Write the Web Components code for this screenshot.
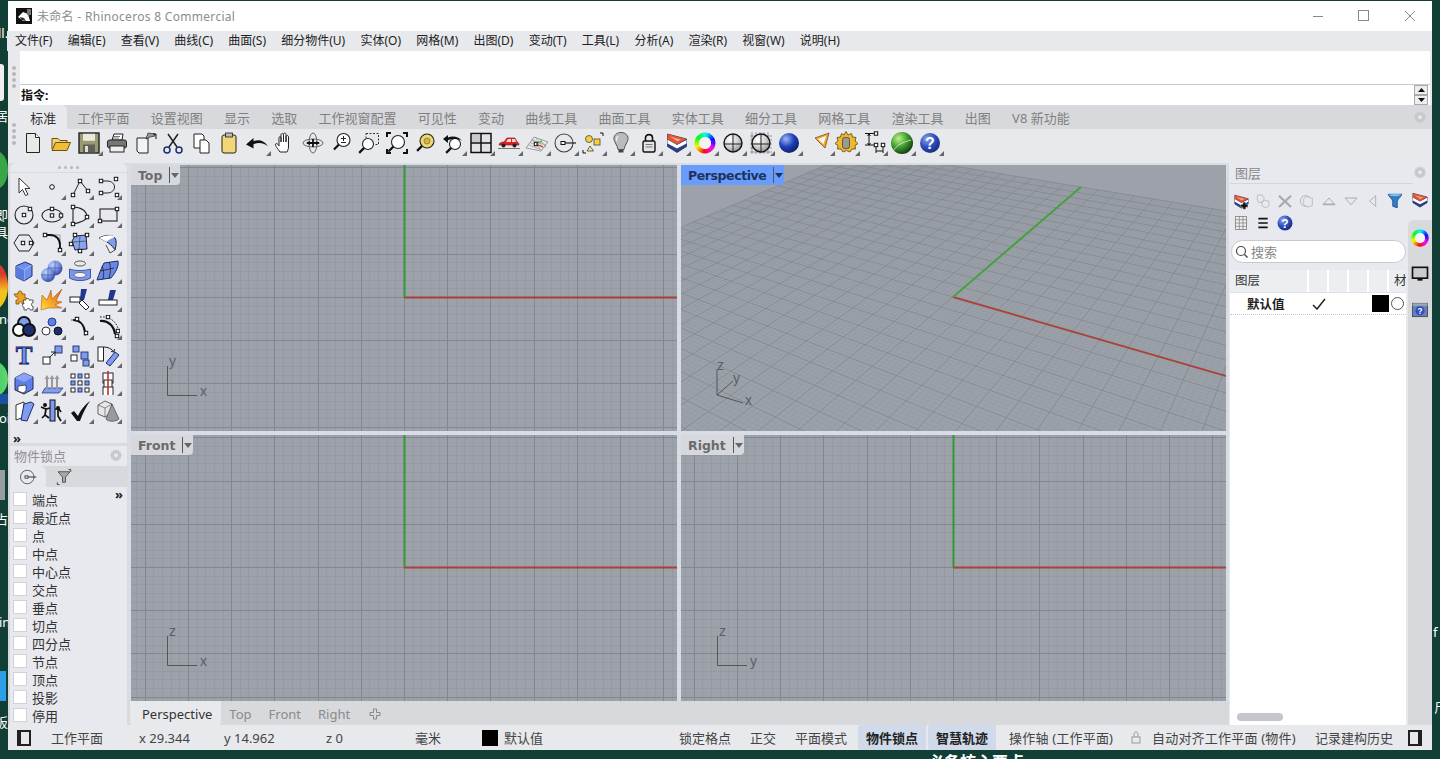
<!DOCTYPE html>
<html lang="zh">
<head>
<meta charset="utf-8">
<title>Rhinoceros 8</title>
<style>
  html, body { margin: 0; height: 100%; background: #113f35; overflow: hidden; }
  body { font-family: "Noto Sans", "Noto Sans CJK SC", sans-serif; font-size: 13px; color: #222; }
</style>
</head>
<body>
<rh-desktop>
  <rh-window>
    <rh-titlebar>未命名 - Rhinoceros 8 Commercial</rh-titlebar>
    <rh-menubar>
      <rh-menu>文件(F)</rh-menu><rh-menu>编辑(E)</rh-menu><rh-menu>查看(V)</rh-menu><rh-menu>曲线(C)</rh-menu><rh-menu>曲面(S)</rh-menu><rh-menu>细分物件(U)</rh-menu><rh-menu>实体(O)</rh-menu><rh-menu>网格(M)</rh-menu><rh-menu>出图(D)</rh-menu><rh-menu>变动(T)</rh-menu><rh-menu>工具(L)</rh-menu><rh-menu>分析(A)</rh-menu><rh-menu>渲染(R)</rh-menu><rh-menu>视窗(W)</rh-menu><rh-menu>说明(H)</rh-menu>
    </rh-menubar>
    <rh-command>指令:</rh-command>
    <rh-tabstrip>
      <rh-tab active>标准</rh-tab><rh-tab>工作平面</rh-tab><rh-tab>设置视图</rh-tab><rh-tab>显示</rh-tab><rh-tab>选取</rh-tab><rh-tab>工作视窗配置</rh-tab><rh-tab>可见性</rh-tab><rh-tab>变动</rh-tab><rh-tab>曲线工具</rh-tab><rh-tab>曲面工具</rh-tab><rh-tab>实体工具</rh-tab><rh-tab>细分工具</rh-tab><rh-tab>网格工具</rh-tab><rh-tab>渲染工具</rh-tab><rh-tab>出图</rh-tab><rh-tab>V8 新功能</rh-tab>
    </rh-tabstrip>
    <rh-toolbar id="top-tools"></rh-toolbar>
    <rh-main>
      <rh-sidebar>
        <rh-palette id="palette"></rh-palette>
        <rh-snaps>
          <rh-check>端点</rh-check><rh-check>最近点</rh-check><rh-check>点</rh-check><rh-check>中点</rh-check><rh-check>中心点</rh-check><rh-check>交点</rh-check><rh-check>垂点</rh-check><rh-check>切点</rh-check><rh-check>四分点</rh-check><rh-check>节点</rh-check><rh-check>顶点</rh-check><rh-check>投影</rh-check><rh-check>停用</rh-check>
        </rh-snaps>
      </rh-sidebar>
      <rh-viewports>
        <rh-viewport label="Top" h="x" v="y"></rh-viewport>
        <rh-viewport label="Perspective" active perspective></rh-viewport>
        <rh-viewport label="Front" h="x" v="z"></rh-viewport>
        <rh-viewport label="Right" h="y" v="z"></rh-viewport>
      </rh-viewports>
      <rh-layers></rh-layers>
    </rh-main>
    <rh-statusbar>
      <rh-status w="43" icon></rh-status>
      <rh-status w="88">工作平面</rh-status>
      <rh-status w="85">x 29.344</rh-status>
      <rh-status w="102">y 14.962</rh-status>
      <rh-status w="89">z 0</rh-status>
      <rh-status w="67">毫米</rh-status>
      <rh-status w="197" swatch>默认值</rh-status>
      <rh-status w="71">锁定格点</rh-status>
      <rh-status w="45">正交</rh-status>
      <rh-status w="63">平面模式</rh-status>
      <rh-status w="70" on>物件锁点</rh-status>
      <rh-status w="70" on>智慧轨迹</rh-status>
      <rh-status w="139" pad="11" spaced>操作轴 (工作平面)</rh-status>
      <rh-status w="15" lock></rh-status>
      <rh-status w="163" spaced>自动对齐工作平面 (物件)</rh-status>
      <rh-status w="93">记录建构历史</rh-status>
      <rh-status w="22" icon2></rh-status>
    </rh-statusbar>
  </rh-window>
</rh-desktop>
<script>
// small svg helpers
const cp = (x, y, s = 3.4) => `<rect x="${x - s / 2}" y="${y - s / 2}" width="${s}" height="${s}" fill="#fff" stroke="#111" stroke-width="1"/>`;
const bsq = (x, y, s = 5) => `<rect x="${x}" y="${y}" width="${s}" height="${s}" fill="#7f9cf0" stroke="#1d2c66" stroke-width=".9"/>`;
const wsq = (x, y, s = 5) => `<rect x="${x}" y="${y}" width="${s}" height="${s}" fill="#fff" stroke="#111" stroke-width=".9"/>`;
const ball = (id, c1, c2, c3, cx = 12, cy = 12, r = 10) => `<defs><radialGradient id="${id}" cx=".35" cy=".3" r=".8"><stop offset="0" stop-color="${c1}"/><stop offset=".5" stop-color="${c2}"/><stop offset="1" stop-color="${c3}"/></radialGradient></defs><circle cx="${cx}" cy="${cy}" r="${r}" fill="url(#${id})"/>`;
const mag = (x, y, r = 5.5, f = '#fff') => `<circle cx="${x}" cy="${y}" r="${r}" fill="${f}" stroke="#222" stroke-width="1.1"/><path d="M${x - r * .7} ${y + r * .7}L${x - r * .7 - 5} ${y + r * .7 + 5}" stroke="#111" stroke-width="2.2"/>`;
function wheel() {
  let s = '';
  for (let i = 0; i < 30; i++) {
    const a = i / 30 * 2 * Math.PI, b = (i + 1.2) / 30 * 2 * Math.PI, r = 8.2;
    s += `<path d="M${12 + r * Math.cos(a)} ${12 + r * Math.sin(a)}A${r} ${r} 0 0 1 ${12 + r * Math.cos(b)} ${12 + r * Math.sin(b)}" fill="none" stroke="hsl(${i * 12 - 90},95%,50%)" stroke-width="4.4"/>`;
  }
  return s + '<circle cx="12" cy="12" r="6" fill="#f4f4f4"/>';
}
const stack = `<path d="M2.500 3L21.500 8v7.500L12 21.500l-9.500-6z" fill="#2b3f8f" stroke="#1c2340" stroke-width=".7"/><path d="M2.500 8.500L12 14l9.500-5v3.500L12 17.500l-9.500-5z" fill="#fff"/><path d="M2.500 3L21.500 8 12 13.500l-9.500-5.500z" fill="#e4572e"/><path d="M5 5.500l11 3-3.500 2z" fill="#f6a58a"/>`;
const sphereLines = id => `${ball(id, '#ffffff', '#d4d4d4', '#8a8a8a', 12, 12, 9)}<circle cx="12" cy="12" r="9" fill="none" stroke="#111" stroke-width="1.400"/><path d="M3 13h18M12 3v18" stroke="#222" stroke-width="1"/>`;

const ICONS = {
  new: `<path d="M5.500 2.500h9l4 4v15h-13z" fill="#e9e9e6" stroke="#222"/><path d="M14.500 2.500v4h4" fill="#fff" stroke="#222"/>`,
  open: `<path d="M3 18V7.500h6l2 2h7V12" fill="#f3d36a" stroke="#6b5314"/><path d="M3 19.500l3.500-8h15l-3.500 8z" fill="#f1bc3a" stroke="#6b5314"/>`,
  save: `<rect x="2" y="2" width="20" height="20" fill="#9c9870" stroke="#222" stroke-width="1.400"/><rect x="6" y="2.800" width="12" height="7" fill="#e9e9e0"/><rect x="6" y="13.500" width="12" height="8" fill="#5f5f5a"/><rect x="8" y="15" width="3" height="6" fill="#e0e0d0"/>`,
  print: `<path d="M7 9l2-6h9l-1 6z" fill="#fff" stroke="#222"/><rect x="2.500" y="9" width="19" height="8" rx="2" fill="#777" stroke="#222"/><rect x="5" y="15" width="14" height="6" fill="#eee" stroke="#222"/><path d="M8 5.500h7M8 7h6" stroke="#555" stroke-width=".8"/>`,
  props: `<path d="M4 7h11v15H6l-2-2z" fill="#f4f4f4" stroke="#222"/><path d="M13 8l2-6 7 1v2l-5 1z" fill="#999" stroke="#222" stroke-width=".7"/><path d="M20 3h3v5" stroke="#111" fill="none"/>`,
  cut: `<path d="M7 3l9 13M17 3L8 16" stroke="#222" stroke-width="1.500"/><circle cx="6" cy="19" r="3" fill="none" stroke="#1d2f70" stroke-width="1.500"/><circle cx="18" cy="19" r="3" fill="none" stroke="#1d2f70" stroke-width="1.500"/>`,
  copy: `<path d="M5 3h8l2 2v12H5z" fill="#fff" stroke="#222"/><path d="M11 9h6l3 3v10h-9z" fill="#fff" stroke="#222"/>`,
  paste: `<rect x="5" y="4" width="14" height="18" rx="2" fill="#f3d677" stroke="#222"/><rect x="8.500" y="2" width="7" height="4" fill="#bbb" stroke="#222" stroke-width=".8"/>`,
  undo: `<path d="M1 13.500l7.500-6.500v3.200c5.500-2.200 10.500-.7 14.500 5-5-3.500-9.500-4-14.500-2v4.300z" fill="#111"/>`,
  pan: `<path d="M7 21c-2-3-5-6-4.500-8 1-1 2.500 0 3.500 2V7c0-2 2-2 2 0v4-7c0-2 2.500-2 2.500 0v7-7.500c0-2 2.500-2 2.500 0V11 6c0-2 2.500-2 2.500 0v10c0 2-1 4-1.500 5z" fill="#fff" stroke="#222"/>`,
  rotate: `<ellipse cx="12" cy="12" rx="10" ry="4" fill="none" stroke="#666"/><ellipse cx="12" cy="12" rx="4" ry="10" fill="none" stroke="#666"/><path d="M6 12h12M12 8v8" stroke="#111" stroke-width="1.800"/><path d="M15 10l4 2-4 2zM9 10l-4 2 4 2z" fill="#111"/>`,
  zoomin: `${mag(14.500, 9, 6.500)}<path d="M12 7.500h5M14.500 5v5M12 11.500h5" stroke="#222"/>`,
  zoomwin: `<rect x="9" y="2.500" width="12.500" height="11" fill="none" stroke="#333" stroke-dasharray="2 1.500"/>${mag(11, 13, 5.500)}`,
  zoomext: `${mag(13, 11, 6.500)}<path d="M2 6V2h4M18 2h4v4M22 18v4h-4M2 18v4h4" stroke="#111" stroke-width="2" fill="none"/>`,
  zoomsel: `${mag(14, 10, 7, '#efd86a')}<circle cx="14" cy="10" r="3" fill="#e0b52c" stroke="#777" stroke-width=".8"/>`,
  undoview: `${mag(14, 13, 5.500)}<path d="M2 8l5-4v2.500c5-2 10-1 14 3-4-2-9-2-14-.5V12z" fill="#111"/>`,
  views: `<rect x="2" y="2.500" width="20" height="19" fill="#e3e3e3" stroke="#111" stroke-width="1.500"/><path d="M12 2.500v19M2 12h20" stroke="#111" stroke-width="1.500"/><rect x="3" y="3.500" width="8" height="7.500" fill="#c9c9c9"/>`,
  car: `<path d="M2 14c0-2 2-3 5-3l3-4h8l2 4c1 0 2 1 2 3z" fill="#dd2222" stroke="#8c1010" stroke-width=".6"/><path d="M11 8h3v3H9zM15 8h3l1 3h-4z" fill="#f6dede"/><circle cx="6.500" cy="14.500" r="2" fill="#222"/><circle cx="17.500" cy="14.500" r="2" fill="#222"/><path d="M1 17.500h22" stroke="#777"/>`,
  gridsnap: `<path d="M1 17L9 6l14 5-7 9z" fill="#e8e8e8" stroke="#888" stroke-width=".8"/><path d="M5 11.500l14 5M7 9l14 5M4 14l13 5M7 8l8 10M11 7l7 9M15 8.500l6 8" stroke="#888" stroke-width=".6"/>${cp(11, 13)}<path d="M11 13l6-3" stroke="#2a9a2a"/><path d="M11 13l7 3" stroke="#cc2222"/>`,
  cplane: `<circle cx="11" cy="12" r="9" fill="none" stroke="#444" stroke-width="1.100"/><rect x="8" y="10.500" width="4" height="3" fill="#fff" stroke="#111"/><path d="M12 12h11" stroke="#222" stroke-width="1.200"/>`,
  osnap: `<circle cx="8" cy="8" r="3.500" fill="#f6d13a" stroke="#444" stroke-width=".8"/><rect x="13" y="8" width="6" height="6" fill="#f6d13a" stroke="#444" stroke-width=".8"/><path d="M9 15l3.500 5H6z" fill="#f6e29a" stroke="#444" stroke-width=".8"/><path d="M19 2h3v3M2 19v3h3" fill="none" stroke="#111"/>`,
  bulb: `<path d="M12 1.500c5 0 7.500 3.500 7 7-.5 3-3.500 6-4 10h-6c-.5-4-3.500-7-4-10-.5-3.500 2-7 7-7z" fill="#b9bcbc" stroke="#555"/><path d="M9.500 19h5v2.500h-5z" fill="#444"/><path d="M9 5c-1 1-2 3-1 5" stroke="#eee" stroke-width="1.500" fill="none"/>`,
  lock: `<rect x="6" y="10" width="12" height="11" rx="1.500" fill="#e4e4e4" stroke="#111" stroke-width="1.400"/><path d="M8.500 10V7c0-4.500 7-4.500 7 0v3" fill="none" stroke="#111" stroke-width="1.600"/><path d="M8.500 13.500h7M8.500 16h7" stroke="#777"/>`,
  layers: stack,
  wheel: wheel(),
  wire: sphereLines('w1'),
  wiregrid: `<path d="M1 5h22M1 9h22M1 13h22M1 17h22M1 21h22M3 1v22M7 1v22M11 1v22M15 1v22M19 1v22" stroke="#777" stroke-width=".7"/>${sphereLines('w2')}`,
  blue: `${ball('b1', '#9fb8f5', '#1f3fb8', '#081a55')}`,
  light: `<path d="M6 7l14-5-4 15z" fill="#f3a93a" stroke="#7a4a10" stroke-width=".8"/><path d="M9 8l8-3-2.500 8z" fill="#fff"/>`,
  gear: `<path d="M12 .500l2 3.500 3.500-1.500 1 3.500 3.500.5-1 3.500 3 2.500-3 2 .5 3.500-3.500 0-2 3-3.500-1.500-3.500 1.500-2-3-3.500 0 .5-3.500-3-2 3-2.500-1-3.500 3.500-.5 1-3.500L10 4z" fill="#eeb92f" stroke="#6e5310" stroke-width=".9"/><rect x="8.500" y="6.500" width="7" height="11" rx="2" fill="#9b9b8c" stroke="#444" stroke-width=".8"/>`,
  dim: `<path d="M3 2.500h9M3 14h9M7 3v11M5.500 5L7 3l1.500 2M5.500 12L7 14l1.500-2M14 15v7M21 15v7M14 20h7" fill="none" stroke="#111"/>${cp(14, 2.500)}${cp(14, 14)}${cp(21, 14)}`,
  green: `${ball('g1', '#bff08c', '#3d9c2e', '#0b2a0c', 12, 12, 11)}<path d="M4 19c3-5 9-8 17-10" stroke="#d8f5c0" stroke-width=".8" fill="none"/>`,
  help: `${ball('h1', '#8ea6ec', '#2f4fc0', '#12256f')}<text x="12" y="18" text-anchor="middle" font-family="Liberation Sans, sans-serif" font-weight="700" font-size="16" fill="#fff">?</text>`,
  // left palette
  select: `<path d="M7 3v15l3.500-3.500 3 6 2.500-1-3-6h5z" fill="#fff" stroke="#333"/>`,
  point: `<circle cx="12" cy="12" r="2.300" fill="#fff" stroke="#111"/>`,
  polyline: `<path d="M5 20l7-14 8 10" fill="none" stroke="#222"/>${cp(5, 20)}${cp(12, 6)}${cp(20, 16)}`,
  curve: `<path d="M5 6h6c10 0 10 12 0 12H5" fill="none" stroke="#222"/>${cp(5, 6)}${cp(20, 4)}${cp(5, 18)}${cp(21, 20)}`,
  circle: `<circle cx="12" cy="12" r="9" fill="none" stroke="#222" stroke-width="1.100"/>${cp(12, 12)}${cp(18, 6)}`,
  ellipse: `<ellipse cx="12" cy="12.500" rx="10" ry="6.500" fill="none" stroke="#222" stroke-width="1.100"/>${cp(12, 6)}${cp(12, 12.500)}${cp(21, 12.500)}`,
  arc: `<path d="M5 4c8 0 14 4 14 10 0 3-8 6-14 7z" fill="none" stroke="#222" stroke-width="1.100"/>${cp(5, 4)}${cp(19, 14)}${cp(5, 21)}`,
  rect: `<rect x="4" y="6" width="17" height="12" fill="none" stroke="#222" stroke-width="1.100"/>${cp(4, 18)}${cp(21, 6)}`,
  polygon: `<path d="M7 4h10l5 8-5 8H7l-5-8z" fill="none" stroke="#222"/>${cp(11, 12)}${cp(19, 12)}`,
  fillet: `<path d="M6 4h8l6 0v14" fill="none" stroke="#999"/><path d="M6 4h4c6 0 10 4 10 10v4" fill="none" stroke="#111" stroke-width="1.800"/>${cp(5, 4)}${cp(20, 19)}`,
  patch: `<path d="M7 5l11-1 1 14-12 1-3-9z" fill="#8aa4ee" stroke="#223"/><path d="M5 11l14-1M12 4.500l-1 14" stroke="#345" stroke-width=".7"/>${cp(7, 4)}${cp(19, 4)}${cp(3, 13)}${cp(12, 20)}`,
  edge: `<path d="M3 7c6-3 13-4 16 0 2 3 1 8 0 12-3-5-8-9-16-12z" fill="#7f9cf0" stroke="#222"/><path d="M3 7c6-3 13-4 16-1-3 1-7 3-8 5z" fill="#fff"/><path d="M10 14l4 8 5-3" fill="#eee" stroke="#222" stroke-width=".8"/>`,
  box: `<path d="M4 7l9-4 7 3v11l-8 5-8-4z" fill="#6f8ff0" stroke="#1d2c66"/><path d="M4 7l8 4 8-5M12 11v11" stroke="#cfe" stroke-width=".5" fill="none"/><path d="M4 7l8 4v11l-8-4z" fill="#5a7bde"/>`,
  spheres: `${ball('s1', '#c3d0fa', '#7390ea', '#2a3f90', 15, 9, 7.500)}${ball('s2', '#c3d0fa', '#7390ea', '#2a3f90', 8, 16, 7)}<path d="M1 16h14M8 9v14" stroke="#345" stroke-width=".5"/><path d="M8 9h14M15 2v14" stroke="#345" stroke-width=".5"/>`,
  cyl: `<ellipse cx="12" cy="4.500" rx="5.500" ry="2.500" fill="#e8e9ed" stroke="#333" stroke-width=".8"/><path d="M1.500 10c6 2 15 2 21 0v9c-6 3.500-15 3.500-21 0z" fill="#7a96ee" stroke="#2a3a80" stroke-width=".8"/><ellipse cx="12" cy="16" rx="6" ry="2.500" fill="#f4f4f4" stroke="#223" stroke-width=".5"/>`,
  gridsrf: `<path d="M8 4l14-2c1 5-2 11-7 17L1 21c2-6 4-11 7-17z" fill="#6a87e4" stroke="#1d2c66"/><path d="M4 12l14 -3M6 7c2 4 2 9 1 13M13 3c2 4 2 9 0 16" stroke="#223" stroke-width=".8" fill="none"/>`,
  puzzle: `<path d="M2 7h4c-1-4 5-4 4 0h3v4c3-1 3 4 0 3v3h-3c1-3-4-3-3 0H4v-4c3 1 3-4 0-3z" fill="#f0a21e" stroke="#7a4a10" stroke-width=".8"/><path d="M11 13h3c-1-2 4-2 3 0h4v3c-2-1-2 4 0 3v4h-3c1-2-4-2-3 0h-3v-3c-2 1-2-4 0-3z" fill="#fff" stroke="#333" stroke-width=".8"/>`,
  explode: `<defs><linearGradient id="ex" x1="0" y1="1" x2="1" y2="0"><stop offset="0" stop-color="#ffe03a"/><stop offset="1" stop-color="#e2560e"/></linearGradient></defs><path d="M1 23l1-15 5 5 4-10 1 9 10-10-6 12 6 1-7 3 7 3H8z" fill="url(#ex)" stroke="#a34a10" stroke-width=".5"/>`,
  trim: `<path d="M13 2h6l-3 11h-4z" fill="#22358f"/><rect x="2" y="10" width="10" height="5" fill="#fff" stroke="#222"/><path d="M14 13l7 7-3 3-7-7z" fill="#fff" stroke="#222"/>`,
  split: `<path d="M14 3h6l-3 10h-5z" fill="#22358f"/><rect x="3" y="13" width="18" height="5" fill="#fff" stroke="#222"/>`,
  boolean: `<circle cx="12" cy="8" r="6" fill="#7f9cf0" stroke="#111" stroke-width="2"/><circle cx="7" cy="15" r="6" fill="#fff" stroke="#111" stroke-width="2"/><circle cx="17" cy="15" r="6" fill="#1e2e70" stroke="#111" stroke-width="2"/>`,
  circles: `<circle cx="12" cy="7" r="4" fill="#5f7fe4" stroke="#223a90"/><circle cx="6" cy="16" r="4" fill="#fff" stroke="#333"/><circle cx="18" cy="16" r="4" fill="#1e2e70" stroke="#111"/>`,
  filletarc: `<path d="M5 5c6 0 11 4 12 12" fill="none" stroke="#111" stroke-width="2"/><path d="M3 5h3M17 17v4" stroke="#555"/>${cp(9, 4)}${cp(18, 18)}`,
  offset: `<path d="M4 6c8-1 14 5 15 13" fill="none" stroke="#111" stroke-width="2.200"/><path d="M4 2c11-1 18 6 19 16" fill="none" stroke="#111" stroke-dasharray="1.500 1.500"/>${cp(12, 2)}${cp(22, 16)}${cp(21, 21)}`,
  text: `<text x="12" y="21" text-anchor="middle" font-family="Liberation Serif, serif" font-weight="700" font-size="25" fill="#6f8ff0" stroke="#14225e" stroke-width=".9">T</text>`,
  move: `${wsq(3, 14, 7)}${bsq(15, 3, 7)}<path d="M9 15l6-6M11 9h4v4" fill="none" stroke="#222"/>`,
  copyobj: `${bsq(5, 3, 6)}${wsq(3, 12, 6)}${bsq(13, 9, 7)}${bsq(15, 17, 6)}`,
  rotobj: `<rect x="2" y="4" width="5.500" height="14" fill="#fff" stroke="#222"/><path d="M8 4c4 0 8 2 10 5M18 9l-3-.5M18 9l.5-3" fill="none" stroke="#222"/><path d="M19 9l4 3-9 11-4-3z" fill="#7f9cf0" stroke="#1d2c66"/>`,
  extr: `<path d="M3 7l9-5 9 4v12l-9 5-9-4z" fill="#5f7ee8" stroke="#1d2c66"/><path d="M3 7l9 4 9-5-9-4z" fill="#8ba4f2"/><path d="M6 15l8-1v6l-3 2-5-2z" fill="#fff" stroke="#222" stroke-width=".7"/>`,
  arrows: `<path d="M5 17l-3 5h17l4-5z" fill="#7f9cf0" stroke="#1d2c66" stroke-width=".7"/><path d="M7 18V7M12 18V7M17 18V7" stroke="#999" stroke-width="2"/><path d="M4.500 8L7 4l2.500 4zM9.500 8L12 4l2.500 4zM14.500 8L17 4l2.500 4z" fill="#999"/>`,
  array: [0, 1, 2].map(r => [0, 1, 2].map(c => (r + c) % 2 ? bsq(3 + c * 7, 3 + r * 7, 4) : wsq(3 + c * 7, 3 + r * 7, 4)).join('')).join(''),
  cage: `${wsq(7, 2, 10)}${wsq(8, 9, 8)}${wsq(7, 16, 10)}<path d="M12 0v24" stroke="#c0302a" stroke-width="1.600"/>`,
  mirror: `<path d="M4 6l8-3v15l-8 3z" fill="#fff" stroke="#333"/><path d="M12 5l7-2 3 2-7 17-6-1z" fill="#7f9cf0" stroke="#1d2c66"/>`,
  figure: `<rect x="10" y="1" width="5" height="21" fill="#7f9cf0" stroke="#111"/><circle cx="5" cy="6" r="2" fill="#111"/><path d="M1 8l5 2 4-1M6 10l-1 6 4 3M5 16l-3 3" stroke="#111" stroke-width="1.700" fill="none"/><circle cx="18" cy="9" r="2" fill="#111"/><path d="M15 10h4l2 3M18 11v6l3 5" stroke="#111" stroke-width="1.700" fill="none"/>`,
  check: `<path d="M3 14l3-2 4 5c3-7 7-11 12-15-4 6-7 12-10 20h-3z" fill="#111"/>`,
  cone: `<path d="M2 6l7-4 7 3v9l-7 4-7-3z" fill="#e6e6e6" stroke="#444" stroke-width=".8"/><path d="M2 6l7 3 7-4M9 9v9" stroke="#444" stroke-width=".6" fill="none"/><path d="M16 5l7 15c-3 3-11 3-13 0z" fill="#9a9a9a" stroke="#444" stroke-width=".7"/>`,
  // layer panel
  newlayer: `${stack}<path d="M14 13h4v3h3v4h-3v3h-4v-3h-3v-4h3z" fill="#111" stroke="#fff" stroke-width=".5"/>`,
  dup: `<path d="M4 3h7l3 5-3 6H5l-2-5zM14 11l7 1v7l-4 3-6-2-1-6z" fill="none" stroke="#aaa"/>`,
  xgray: `<path d="M4 5l16 15M20 5L4 20" stroke="#aaa" stroke-width="3"/>`,
  undolayer: `<circle cx="10" cy="12" r="8" fill="none" stroke="#aaa" stroke-width="1.200"/><path d="M11 5l9 3v11l-7 2-6-3V9z" fill="#e8e9ef" stroke="#aaa"/>`,
  triup: `<path d="M4 17L12 8l8 9z" fill="none" stroke="#999"/><path d="M4 16h16" stroke="#999"/>`,
  tridown: `<path d="M4 8l8 9 8-9z" fill="none" stroke="#999"/>`,
  trileft: `<path d="M16 4L7 12l9 8z" fill="none" stroke="#999"/>`,
  funnel: `<path d="M3 3h18c0 3-6 6-6 10v8l-6-2v-6C9 9 3 6 3 3z" fill="#2f80c8" stroke="#123a80"/><ellipse cx="12" cy="4" rx="8" ry="1.500" fill="#7cc2ee"/>`,
  funnelgray: `<path d="M4 5h16l-6 7v7h-4v-7z" fill="#aaa" stroke="#333"/><path d="M3 19v3h3M18 2h3v3" stroke="#222" fill="none"/>`,
  table: `<rect x="4" y="2" width="16" height="20" fill="#eee" stroke="#666"/><path d="M4 7h16M4 12h16M4 17h16M9.500 2v20M15 2v20" stroke="#777"/>`,
  list: `<path d="M5 5.500h14M5 12h14M5 18.500h14" stroke="#111" stroke-width="2.600"/>`,
  monitor: `<rect x="3" y="4" width="18" height="13" fill="#ccc" stroke="#111" stroke-width="2"/><path d="M9 18h6v2H9z" fill="#111"/>`,
  helppanel: `<rect x="3" y="4" width="18" height="16" fill="#6c7fb8" stroke="#444"/><rect x="3" y="4" width="18" height="3" fill="#9aa"/><circle cx="12" cy="13" r="5.500" fill="#2f4fc0"/><text x="12" y="17" text-anchor="middle" font-family="Liberation Sans, sans-serif" font-weight="700" font-size="10" fill="#fff">?</text>`,
  gearflat: `<path d="M12 3l1.500 2.500 3-1 .5 3 3 .5-1 3 2.500 1.500-2.500 1.500 1 3-3 .5-.5 3-3-1L12 22l-1.500-2.500-3 1-.5-3-3-.5 1-3L2.500 12.500 5 11l-1-3 3-.5.5-3 3 1z" fill="#c6c8cc"/><circle cx="12" cy="12.500" r="3" fill="#e8e9ef"/>`
};
const svg = (name, size = 24) => `<svg width="${size}" height="${size}" viewBox="0 0 24 24">${ICONS[name] || ''}</svg>`;

const define = (tag, css, html, setup) => customElements.define(tag, class extends HTMLElement {
  connectedCallback() {
    if (this.shadowRoot) return;
    this.attachShadow({ mode: 'open' });
    this.shadowRoot.innerHTML = `<style>${css}</style>${typeof html === 'function' ? html(this) : html}`;
    if (setup) setup(this);
  }
});

define('rh-desktop', `
  :host { display: block; position: relative; width: 1440px; height: 759px; overflow: hidden; background: #113f35; }
  .f { position: absolute; }
  .t { position: absolute; color: #fff; font-size: 13px; line-height: 14px; }
`, `
  <div class="t" style="left:-2px;top:26px">ll.</div>
  <div class="f" style="left:-8px;top:64px;width:12px;height:37px;background:#eee;border-radius:3px"></div>
  <div class="t" style="left:-5px;top:109px">居</div>
  <div class="f" style="left:-20px;top:150px;width:28px;height:40px;border-radius:50%;background:#3aa648"></div>
  <div class="t" style="left:-5px;top:208px">即</div>
  <div class="t" style="left:-5px;top:225px">具</div>
  <div class="f" style="left:-22px;top:262px;width:30px;height:48px;border-radius:50%;background:linear-gradient(#d8392c 25%,#f4c21c 60%)"></div>
  <div class="t" style="left:-1px;top:312px">ne</div>
  <div class="f" style="left:-22px;top:361px;width:30px;height:36px;border-radius:50%;background:linear-gradient(90deg,#2fb85c,#5fd870)"></div>
  <div class="f" style="left:-6px;top:394px;width:14px;height:10px;background:#1c4fa0"></div>
  <div class="t" style="left:-1px;top:411px">oi</div>
  <div class="f" style="left:-3px;top:470px;width:8px;height:30px;background:#9a9d9d"></div>
  <div class="t" style="left:-5px;top:512px">占</div>
  <div class="t" style="left:-1px;top:615px">in</div>
  <div class="f" style="left:-4px;top:671px;width:10px;height:30px;background:#2f9ee8"></div>
  <div class="t" style="left:-5px;top:715px">板</div>
  <div class="t" style="left:1433px;top:625px">f</div>
  <div class="t" style="left:1434px;top:700px">斤</div>
  <div class="t" style="left:928px;top:752px;font-size:16px;font-weight:700;line-height:20px">必备核心要点</div>
  <slot></slot>
`);

define('rh-window', `
  :host { display: block; position: absolute; left: 8px; top: 1px; width: 1424px; height: 749px; }
  .frame { display: flex; flex-direction: column; height: 100%; background: #e8e9ed; }
`, `<div class="frame"><slot></slot></div>`);

define('rh-titlebar', `
  :host { display: flex; align-items: center; height: 30px; flex: none; background: #fff; color: #8c8c8c; font-size: 12px; letter-spacing: .3px; padding-bottom: 1px; box-sizing: border-box; }
  .logo { margin: 0 5px 0 8px; display: block; }
  .txt { flex: 1; }
  .ctl { width: 46px; display: flex; justify-content: center; }
`, `
  <svg class="logo" width="16" height="16" viewBox="0 0 16 16"><rect width="16" height="16" fill="#111"/><path d="M2 9l5-5 5 2 2 7H7z" fill="#fff"/><path d="M4 9l4 1 2 3-5-1z" fill="#333"/><rect x="11" y="1" width="4" height="6" fill="#777"/></svg>
  <span class="txt"><slot></slot></span>
  <span class="ctl"><svg width="12" height="12"><path d="M1 6.500h10" stroke="#888"/></svg></span>
  <span class="ctl"><svg width="12" height="12"><rect x=".5" y=".5" width="10" height="10" fill="none" stroke="#888"/></svg></span>
  <span class="ctl" style="margin-right:-1px"><svg width="12" height="12"><path d="M1 1l10 10M11 1L1 11" stroke="#888"/></svg></span>
`);

define('rh-menubar', `:host { display: flex; align-items: center; height: 20px; flex: none; background: #e8e9ed; font-size: 12px; padding-bottom: 1px; box-sizing: border-box; text-indent: 0; margin-left: -.6px; }`, `<slot></slot>`);
define('rh-menu', `:host { display: block; padding: 0 7.600px; white-space: nowrap; color: #222; line-height: 20px; }`, `<slot></slot>`);

define('rh-command', `
  :host { display: flex; flex: none; height: 54px; background: #e8e9ed; }
  .grip { width: 12px; flex: none; display: flex; flex-direction: column; align-items: center; justify-content: center; gap: 2px; padding-bottom: 2px; }
  .grip i { width: 4px; height: 4px; border-radius: 50%; background: #b5b7bb; }
  .col { flex: 1; display: flex; flex-direction: column; margin-right: 2px; }
  .hist { height: 33px; background: #fff; border-bottom: 1px solid #c3cbd9; }
  .prompt { flex: 1; background: #fff; display: flex; align-items: center; font-weight: 700; font-size: 12px; padding-left: 1px; color: #111; }
  .txt { flex: 1; }
  .spin { display: flex; flex-direction: column; margin-right: 2px; }
  .spin b { width: 12px; height: 8px; border: 1px solid #aaa; background: #eee; display: flex; align-items: center; justify-content: center; }
`, `
  <div class="grip"><i></i><i></i><i></i><i></i></div>
  <div class="col">
    <div class="hist"></div>
    <div class="prompt"><span class="txt"><slot></slot></span>
      <div class="spin">
        <b><svg width="7" height="4"><path d="M0 4L3.500 0 7 4z" fill="#111"/></svg></b>
        <b><svg width="7" height="4"><path d="M0 0L3.500 4 7 0z" fill="#111"/></svg></b>
      </div>
    </div>
  </div>
`);

define('rh-tabstrip', `
  :host { display: flex; align-items: stretch; flex: none; height: 24px; background: #d8d9dd; position: relative; }
  .grip { width: 11.500px; background: #e8e9ed; flex: none; }
  .gear { position: absolute; right: 4px; top: 4px; }
`, `<div class="grip"></div><slot></slot><span class="gear">${svg('gearflat', 16)}</span>`);
define('rh-tab', `
  :host { display: block; padding: 0 10.630px; color: #808080; font-size: 13px; line-height: 26px; white-space: nowrap; }
  :host([active]) { background: #e8e9ed; color: #333; border-radius: 0 6px 0 0; }
`, `<slot></slot>`);

define('rh-tool', `
  :host { display: flex; width: 28px; height: 28px; flex: none; align-items: center; justify-content: center; position: relative; }
  svg.i { display: block; }
  .fly { position: absolute; right: 0; bottom: 1px; width: 0; height: 0; border-left: 5px solid transparent; border-bottom: 5px solid #666; }
`, el => `${svg(el.getAttribute('icon'), +el.getAttribute('size') || 24).replace('<svg', '<svg class="i"')}${el.hasAttribute('flyout') ? '<i class="fly"></i>' : ''}`);

const tool = (name, fly) => `<rh-tool icon="${name}"${fly ? ' flyout' : ''}></rh-tool>`;

define('rh-toolbar', `
  :host { display: flex; flex: none; height: 31px; background: #e8e9ed; padding-left: 11px; box-sizing: border-box; position: relative; }
  .grip { position: absolute; left: 4px; top: -6px; display: flex; flex-direction: column; gap: 2px; }
  .grip i { width: 4px; height: 4px; border-radius: 50%; background: #b5b7bb; }
`, () => {
  const names = ['new', 'open', 'save*', 'print', 'props', 'cut', 'copy', 'paste', 'undo*', 'pan', 'rotate', 'zoomin', 'zoomwin', 'zoomext', 'zoomsel', 'undoview*', 'views*', 'car*', 'gridsnap*', 'cplane*', 'osnap*', 'bulb*', 'lock*', 'layers*', 'wheel*', 'wire*', 'wiregrid*', 'blue*', 'light*', 'gear*', 'dim*', 'green*', 'help*'];
  return `<div class="grip"><i></i><i></i><i></i><i></i></div>` + names.map(n => tool(n.replace('*', ''), n.endsWith('*'))).join('').replace('icon="light"', 'icon="light" style="margin:0 -3px 0 4px"');
});

define('rh-main', `:host { display: flex; flex: 1; min-height: 0; margin-top: 3px; background: #d8dade; }`, `<slot></slot>`);
define('rh-sidebar', `:host { display: flex; flex-direction: column; width: 120px; flex: none; box-sizing: border-box; padding-left: 2px; padding-right: 1px; gap: 3px; }`, `<slot></slot>`);

define('rh-palette', `
  :host { display: block; height: 280px; flex: none; background: #e8e9ef; border-radius: 6px 6px 0 0; position: relative; }
  .grip { height: 10px; display: flex; justify-content: center; align-items: center; gap: 3px; border-bottom: 1px solid #d8dade; box-sizing: border-box; }
  .grip i { width: 3px; height: 3px; border-radius: 50%; background: #b5b7bb; }
  .grid { display: grid; grid-template-columns: repeat(4, 28px); grid-auto-rows: 28px; }
  .more { font-size: 13px; font-weight: 700; color: #222; margin: 0 0 0 3px; line-height: 26px; }
`, () => {
  const names = ['select', 'point*', 'polyline*', 'curve*', 'circle*', 'ellipse*', 'arc*', 'rect*', 'polygon*', 'fillet*', 'patch*', 'edge*', 'box*', 'spheres*', 'cyl*', 'gridsrf*', 'puzzle*', 'explode*', 'trim*', 'split*', 'boolean*', 'circles*', 'filletarc*', 'offset*', 'text', 'move*', 'copyobj*', 'rotobj*', 'extr*', 'arrows*', 'array*', 'cage*', 'mirror*', 'figure*', 'check*', 'cone*'];
  return `<div class="grip"><i></i><i></i><i></i><i></i></div><div class="grid">${names.map(n => tool(n.replace('*', ''), n.endsWith('*'))).join('')}</div><div class="more">»</div>`;
});

define('rh-snaps', `
  :host { display: flex; flex-direction: column; flex: 1; min-height: 0; background: #e8e9ef; position: relative; }
  .head { height: 20px; flex: none; display: flex; align-items: center; justify-content: space-between; padding: 0 3px 2px 4px; box-sizing: border-box; color: #909090; font-size: 13px; border-radius: 6px 6px 0 0; }
  .tabs { height: 21px; flex: none; display: flex; background: #d8d9dd; }
  .tabs div { display: flex; align-items: center; justify-content: center; }
  .on { width: 36px; background: #e8e9ef; border-radius: 0 6px 0 0; }
  .off { width: 36px; }
  .list { flex: 1; padding-top: 3px; }
  .more { position: absolute; right: 4px; top: 39px; font-size: 13px; font-weight: 700; color: #222; }
`, `
  <div class="head"><span>物件锁点</span>${svg('gearflat', 16)}</div>
  <div class="tabs"><div class="on">${svg('cplane', 18)}</div><div class="off">${svg('funnelgray', 18)}</div></div>
  <div class="list"><slot></slot></div>
  <div class="more">»</div>
`);
define('rh-check', `
  :host { display: flex; align-items: center; height: 18px; padding-left: 3px; gap: 5px; font-size: 13px; color: #333; }
  i { width: 12px; height: 12px; background: #fff; border: 1px solid #d0d2d7; display: block; flex: none; }
`, `<i></i><span><slot></slot></span>`);

define('rh-viewports', `
  :host { display: flex; flex-direction: column; width: 1101px; flex: none; }
  .grid { display: grid; grid-template-columns: 546px 545px; grid-template-rows: 266px 266px; gap: 4px; padding: 2px 0 0 3px; background: #d8dce4; }
  .tabs { flex: 1; display: flex; align-items: stretch; background: #d8d9dd; color: #8a8a8a; font-size: 13px; line-height: 26px; }
  .tabs span { padding: 0 10px 0 7px; }
  .tabs .on { background: #e8e9ed; color: #333; border-radius: 0 0 6px 6px; margin-left: 2px; padding: 0 9px 0 12px; margin-right: 1px; }
  .tabs svg { margin: 7px 0 0 9px; }
`, `
  <div class="grid"><slot></slot></div>
  <div class="tabs"><span class="on">Perspective</span><span>Top</span><span>Front</span><span>Right</span>
    <svg width="12" height="12"><path d="M4.500 1h3v3.500H11v3H7.500V11h-3V7.500H1v-3h3.500z" fill="none" stroke="#888"/></svg></div>
`);

function orthoGrid(w, h, ox, oy) {
  const step = 8.64;
  let minor = '', major = '';
  for (let i = -80; i < 80; i++) {
    const x = Math.round(ox + i * step) + .5, y = Math.round(oy + i * step) + .5;
    const target = i % 5 === 0;
    if (x >= 0 && x <= w) { if (target) major += `M${x} 0V${h}`; else minor += `M${x} 0V${h}`; }
    if (y >= 0 && y <= h) { if (target) major += `M0 ${y}H${w}`; else minor += `M0 ${y}H${w}`; }
  }
  return `<path d="${minor}" stroke="#959aa2" fill="none"/><path d="${major}" stroke="#82868e" fill="none"/>`;
}

function perspGrid() {
  // ground plane as a homography built from the two vanishing points
  const O = [272, 132], Vx = [-105 - 681, -9 - 165], Vy = [1387 - 681, -76 - 165], a = -.325, b = .418;
  const P = (X, Y) => {
    const d = X * a + Y * b + 1;
    return [(X * a * Vx[0] + Y * b * Vy[0] + O[0]) / d, (X * a * Vx[1] + Y * b * Vy[1] + O[1]) / d];
  };
  const N = 16 * 5;
  let minor = '', major = '';
  for (let i = -N; i <= N; i++) {
    const t = i / N;
    const p1 = P(t, -1), p2 = P(t, 1), q1 = P(-1, t), q2 = P(1, t);
    const s = `M${p1[0].toFixed(1)} ${p1[1].toFixed(1)}L${p2[0].toFixed(1)} ${p2[1].toFixed(1)}M${q1[0].toFixed(1)} ${q1[1].toFixed(1)}L${q2[0].toFixed(1)} ${q2[1].toFixed(1)}`;
    if (i % 5 === 0) major += s; else minor += s;
  }
  const c = P(-1, 1), d = P(1, 1), e = P(1, -1), f = P(-1, -1);
  const end = P(0, 1), xEnd = P(1, 0);
  return `<path d="M${c}L${d}L${e}L${f}Z" fill="#9ba1a9"/>
    <path d="${minor}" stroke="#91969e" stroke-width=".4" fill="none"/><path d="${major}" stroke="#83878f" stroke-width=".8" fill="none"/>
    <path d="M${O}L${xEnd}" stroke="#a8453f" stroke-width="2"/><path d="M${O}L${end}" stroke="#46a040" stroke-width="2"/>`;
}

define('rh-viewport', `
  :host { display: block; position: relative; background: #9ca1aa; overflow: hidden; }
  svg.g { position: absolute; left: 0; top: 0; display: block; }
  .label { position: absolute; left: 0; top: 0; display: flex; align-items: center; height: 20px; background: #d6d8dd; color: #6a6a6a; font-family: "DejaVu Sans", sans-serif; font-weight: 700; font-size: 12.500px; padding-left: 7px; border-radius: 0 0 4px 0; }
  :host([active]) .label { background: #6a9dfb; color: #1c3260; letter-spacing: -.42px; }
  .label span { margin-right: 7px; }
  .label i { width: 1px; height: 16px; background: #555; }
  .label b { width: 10px; display: flex; justify-content: center; }
  .axt { position: absolute; font-family: "Liberation Sans", sans-serif; font-size: 14px; color: #5c5f66; line-height: 14px; }
`, el => {
  const w = el.getAttribute('label') === 'Perspective' || el.getAttribute('label') === 'Right' ? 545 : 546, h = 266;
  const persp = el.hasAttribute('perspective');
  const ox = w === 545 ? 272 : 273, oy = 132;
  let body, axes;
  if (persp) {
    body = perspGrid();
    axes = `<path d="M36 204v26l26 8M36 230l16-14" fill="none" stroke="#555"/>`;
  } else {
    body = orthoGrid(w, h, ox, oy) + `<path d="M${ox} ${oy + .5}H${w}" stroke="#a8403c" stroke-width="2"/><path d="M${ox + .5} ${oy}V0" stroke="#2f9a30" stroke-width="2"/>`;
    axes = `<path d="M36.500 201v29.500H66" fill="none" stroke="#555"/>`;
  }
  const hl = el.getAttribute('h'), vl = el.getAttribute('v');
  const labels = persp
    ? `<span class="axt" style="left:36px;top:193px">z</span><span class="axt" style="left:52px;top:206px">y</span><span class="axt" style="left:64px;top:228px">x</span>`
    : `<span class="axt" style="left:38px;top:189px">${vl}</span><span class="axt" style="left:69px;top:219px">${hl}</span>`;
  return `<svg class="g" width="${w}" height="${h}">${body}${axes}</svg>${labels}
    <div class="label"><span>${el.getAttribute('label')}</span><i></i><b><svg width="8" height="5"><path d="M0 0h8L4 5z" fill="${el.hasAttribute('active') ? '#1c3260' : '#666'}"/></svg></b></div>`;
});

define('rh-layers', `
  :host { display: flex; flex-direction: column; flex: 1; background: #e8e9ef; min-width: 0; }
  .head { height: 21px; flex: none; display: flex; align-items: center; justify-content: space-between; padding: 0 4px 3px 6px; box-sizing: border-box; color: #888; font-size: 13px; background: linear-gradient(#d4d6db, #d4d6db) 1px 100% / 183px 1px no-repeat; }
  .body { flex: 1; display: flex; min-height: 0; }
  .left { width: 179px; flex: none; display: flex; flex-direction: column; padding-top: 6px; box-sizing: border-box; }
  .row { display: flex; height: 22px; padding-left: 1px; }
  .row span { width: 22px; display: flex; justify-content: center; align-items: center; }
  .search { margin: 6px 0 0 2px; width: 175px; height: 23px; box-sizing: border-box; background: #fff; border: 1px solid #c6cad3; border-radius: 12px; display: flex; align-items: center; gap: 1px; padding-left: 2px; color: #888; font-size: 13px; }
  .table { margin: 7px 2px 0 1px; flex: 1; background: #fff; position: relative; font-size: 12.500px; }
  .tr { display: grid; grid-template-columns: 79px 20px 20px 20px 20px 1fr; }
  .th { height: 22px; background: #eceef2; border-bottom: 1px solid #dfe1e6; }
  .th div { border-right: 2px solid #fff; line-height: 22px; padding-left: 5px; color: #333; overflow: hidden; }
  .th div:last-child { border-right: 0; }
  .td { height: 21px; border-bottom: 1px dotted #c5c7cc; align-items: center; }
  .td .n { font-weight: 700; padding-left: 17px; color: #222; }
  .td .c { display: flex; justify-content: center; }
  .sw { width: 17px; height: 17px; background: #000; display: block; }
  .dot { width: 11px; height: 11px; border: 1px solid #555; border-radius: 50%; display: block; margin-left: 2px; background: #fff; }
  .thumb { position: absolute; left: 7px; bottom: 4px; width: 46px; height: 8px; background: #c4c6cb; border-radius: 4px; }
  .right { flex: 1; display: flex; flex-direction: column; }
  .act { display: flex; justify-content: center; align-items: flex-start; padding-top: 7px; flex: none; height: 29px; }
  .strip { flex: 1; background: #d8d9dd; border-radius: 6px 0 0 0; display: flex; flex-direction: column; align-items: center; padding-top: 8px; gap: 16px; }
  .strip svg { display: block; }
`, `
  <div class="head"><span>图层</span>${svg('gearflat', 16)}</div>
  <div class="body">
    <div class="left">
      <div class="row"><span>${svg('newlayer', 17)}</span><span>${svg('dup', 16)}</span><span>${svg('xgray', 18)}</span><span>${svg('undolayer', 16)}</span><span>${svg('triup', 18)}</span><span>${svg('tridown', 18)}</span><span>${svg('trileft', 16)}</span><span>${svg('funnel', 18)}</span></div>
      <div class="row"><span>${svg('table', 16)}</span><span>${svg('list', 16)}</span><span>${svg('help', 18)}</span></div>
      <div class="search"><svg width="16" height="16" viewBox="0 0 16 16"><circle cx="7" cy="7" r="4.500" fill="none" stroke="#444" stroke-width="1.200"/><path d="M10.500 10.500l3 3" stroke="#444" stroke-width="1.400"/></svg><span>搜索</span></div>
      <div class="table">
        <div class="tr th"><div>图层</div><div></div><div></div><div></div><div></div><div>材</div></div>
        <div class="tr td"><div class="n">默认值</div><div class="c"><svg width="14" height="12"><path d="M1 7l4 4 8-10" fill="none" stroke="#222" stroke-width="1.500"/></svg></div><div></div><div></div><div></div><div style="display:flex;align-items:center"><i class="sw" style="margin-left:-17px"></i><i class="dot"></i></div></div>
        <div class="thumb"></div>
      </div>
    </div>
    <div class="right">
      <div class="act">${svg('layers', 18)}</div>
      <div class="strip">${svg('wheel', 20)}${svg('monitor', 20)}${svg('helppanel', 20)}</div>
    </div>
  </div>
`);

define('rh-statusbar', `:host { display: flex; align-items: stretch; flex: none; height: 25px; background: #e8e9ed; font-size: 13px; color: #444; }`, `<slot></slot>`);
define('rh-status', `
  :host { display: flex; align-items: center; flex: none; white-space: nowrap; box-sizing: border-box; }
  :host([on]) { background: #d0daea padding-box; font-weight: 700; padding-left: 8px; border-right: 2px solid transparent; border-radius: 2px; color: #222; }
  :host([spaced]) { letter-spacing: .2px; }
  i.sw { width: 16px; height: 16px; background: #000; display: block; margin-right: 6px; }
  i.win { width: 8px; height: 12px; border: 2px solid #222; border-left-width: 4px; display: block; background: #e8e9ed; }
`, el => {
  el.style.width = el.getAttribute('w') + 'px';
  if (el.hasAttribute('pad')) el.style.paddingLeft = el.getAttribute('pad') + 'px';
  if (el.hasAttribute('icon')) return `<i class="win" style="margin-left:9px"></i>`;
  if (el.hasAttribute('icon2')) return `<i class="win" style="margin-left:0;border-left-width:2px;border-right-width:4px"></i>`;
  if (el.hasAttribute('lock')) return `<svg width="10" height="13" style="margin-left:-6px"><rect x="1" y="6" width="8" height="6" fill="none" stroke="#999"/><path d="M3 6V3c0-2.500 4-2.500 4 0v3" fill="none" stroke="#999"/></svg>`;
  if (el.hasAttribute('swatch')) return `<i class="sw"></i><slot></slot>`;
  return `<slot></slot>`;
});
</script>
</body>
</html>
